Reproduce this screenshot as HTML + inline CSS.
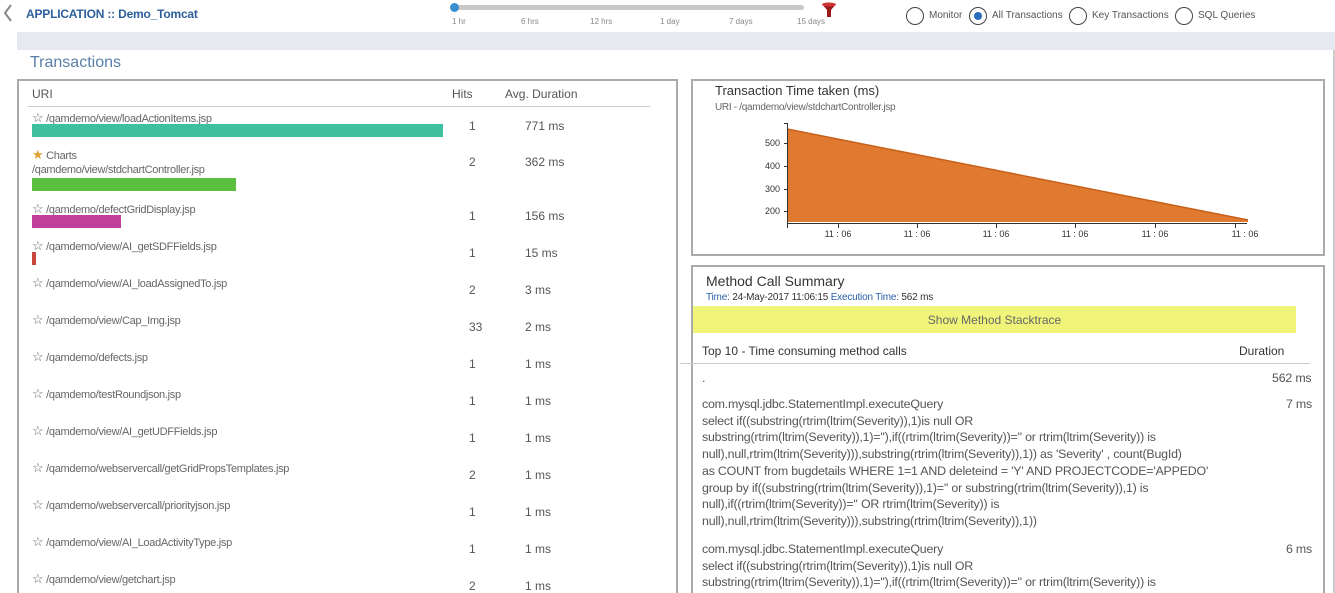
<!DOCTYPE html>
<html><head><meta charset="utf-8"><style>
*{margin:0;padding:0;box-sizing:border-box}
html{width:1335px;height:593px;overflow:hidden}
body{width:1335px;height:593px;overflow:hidden;background:#fff;font-family:"Liberation Sans",sans-serif;color:#555;position:relative}
.a{position:absolute;white-space:nowrap}
.u{font-size:11px;color:#666;letter-spacing:-0.3px}
.n{font-size:12px;color:#555}
.st{font-size:12px;color:#777}
.m{font-size:12.4px;color:#555;letter-spacing:-0.2px;line-height:16.7px}
</style></head><body>
<svg class="a" style="left:2px;top:4px" width="12" height="18"><path d="M9 1L3 9l6 8" stroke="#888" stroke-width="2" fill="none"/></svg>
<div class="a" style="left:26px;top:7px;font-size:12px;font-weight:bold;color:#2d5f9a;letter-spacing:-0.2px">APPLICATION :: Demo_Tomcat</div>
<div class="a" style="left:454px;top:5px;width:350px;height:5px;background:#c8c8c8;border-radius:3px"></div>
<div class="a" style="left:450px;top:3px;width:9px;height:9px;background:#3a8fd0;border-radius:50%"></div>
<div class="a" style="font-size:8px;color:#888;top:17px;left:452px">1 hr</div>
<div class="a" style="font-size:8px;color:#888;top:17px;left:521px">6 hrs</div>
<div class="a" style="font-size:8px;color:#888;top:17px;left:590px">12 hrs</div>
<div class="a" style="font-size:8px;color:#888;top:17px;left:660px">1 day</div>
<div class="a" style="font-size:8px;color:#888;top:17px;left:729px">7 days</div>
<div class="a" style="font-size:8px;color:#888;top:17px;left:797px">15 days</div>
<svg class="a" style="left:821px;top:2px" width="16" height="16"><path d="M1 2h14l-5 6v7h-4v-7z" fill="#9a1b1b"/><ellipse cx="8" cy="2.5" rx="7" ry="2" fill="#c33"/></svg>
<div class="a" style="left:906px;top:7px;width:18px;height:18px;border:1.5px solid #444;border-radius:50%"></div>
<div class="a st" style="left:929px;top:10px;font-size:10px;color:#555">Monitor</div>
<div class="a" style="left:969px;top:7px;width:18px;height:18px;border:1.5px solid #444;border-radius:50%"></div>
<div class="a" style="left:974px;top:12px;width:8px;height:8px;background:#2a6fb8;border-radius:50%"></div>
<div class="a st" style="left:992px;top:10px;font-size:10px;color:#555">All Transactions</div>
<div class="a" style="left:1069px;top:7px;width:18px;height:18px;border:1.5px solid #444;border-radius:50%"></div>
<div class="a st" style="left:1092px;top:10px;font-size:10px;color:#555">Key Transactions</div>
<div class="a" style="left:1175px;top:7px;width:18px;height:18px;border:1.5px solid #444;border-radius:50%"></div>
<div class="a st" style="left:1198px;top:10px;font-size:10px;color:#555">SQL Queries</div>
<div class="a" style="left:17px;top:32px;width:1318px;height:18px;background:#e6eaf0"></div>
<div class="a" style="left:30px;top:54px;font-size:16px;color:#5a7fa8">Transactions</div>
<div class="a" style="left:1333px;top:50px;width:2px;height:543px;background:#ccc"></div>
<div class="a" style="left:17px;top:79px;width:661px;height:530px;border:2px solid #aaa"></div>
<div class="a" style="left:32px;top:87px;font-size:12px;color:#555">URI</div>
<div class="a" style="left:452px;top:87px;font-size:12px;color:#555">Hits</div>
<div class="a" style="left:505px;top:87px;font-size:12px;color:#555">Avg. Duration</div>
<div class="a" style="left:28px;top:106px;width:622px;height:1px;background:#ccc"></div>

<div class="a u" style="left:32px;top:110px"><span style="font-size:13px">☆</span> /qamdemo/view/loadActionItems.jsp</div>
<div class="a" style="left:32px;top:124px;width:411px;height:13px;background:#3dbfa0"></div>
<div class="a n" style="left:469px;top:119px">1</div><div class="a n" style="left:525px;top:119px">771 ms</div>
<div class="a u" style="left:32px;top:147px"><span style="color:#e0a030;font-size:13px">★</span> Charts</div>
<div class="a u" style="left:32px;top:164px">/qamdemo/view/stdchartController.jsp</div>
<div class="a" style="left:32px;top:178px;width:204px;height:13px;background:#5bbf3f"></div>
<div class="a n" style="left:469px;top:155px">2</div><div class="a n" style="left:525px;top:155px">362 ms</div>
<div class="a u" style="left:32px;top:201px"><span style="font-size:13px">☆</span> /qamdemo/defectGridDisplay.jsp</div>
<div class="a" style="left:32px;top:215px;width:89px;height:13px;background:#c0409a"></div>
<div class="a n" style="left:469px;top:209px">1</div><div class="a n" style="left:525px;top:209px">156 ms</div>
<div class="a u" style="left:32px;top:238px"><span style="font-size:13px">☆</span> /qamdemo/view/AI_getSDFFields.jsp</div>
<div class="a" style="left:32px;top:252px;width:4px;height:13px;background:#c8483c"></div>
<div class="a n" style="left:469px;top:246px">1</div><div class="a n" style="left:525px;top:246px">15 ms</div>
<div class="a u" style="left:32px;top:275px"><span style="font-size:13px">☆</span> /qamdemo/view/AI_loadAssignedTo.jsp</div>
<div class="a n" style="left:469px;top:283px">2</div><div class="a n" style="left:525px;top:283px">3 ms</div>
<div class="a u" style="left:32px;top:312px"><span style="font-size:13px">☆</span> /qamdemo/view/Cap_Img.jsp</div>
<div class="a n" style="left:469px;top:320px">33</div><div class="a n" style="left:525px;top:320px">2 ms</div>
<div class="a u" style="left:32px;top:349px"><span style="font-size:13px">☆</span> /qamdemo/defects.jsp</div>
<div class="a n" style="left:469px;top:357px">1</div><div class="a n" style="left:525px;top:357px">1 ms</div>
<div class="a u" style="left:32px;top:386px"><span style="font-size:13px">☆</span> /qamdemo/testRoundjson.jsp</div>
<div class="a n" style="left:469px;top:394px">1</div><div class="a n" style="left:525px;top:394px">1 ms</div>
<div class="a u" style="left:32px;top:423px"><span style="font-size:13px">☆</span> /qamdemo/view/AI_getUDFFields.jsp</div>
<div class="a n" style="left:469px;top:431px">1</div><div class="a n" style="left:525px;top:431px">1 ms</div>
<div class="a u" style="left:32px;top:460px"><span style="font-size:13px">☆</span> /qamdemo/webservercall/getGridPropsTemplates.jsp</div>
<div class="a n" style="left:469px;top:468px">2</div><div class="a n" style="left:525px;top:468px">1 ms</div>
<div class="a u" style="left:32px;top:497px"><span style="font-size:13px">☆</span> /qamdemo/webservercall/priorityjson.jsp</div>
<div class="a n" style="left:469px;top:505px">1</div><div class="a n" style="left:525px;top:505px">1 ms</div>
<div class="a u" style="left:32px;top:534px"><span style="font-size:13px">☆</span> /qamdemo/view/AI_LoadActivityType.jsp</div>
<div class="a n" style="left:469px;top:542px">1</div><div class="a n" style="left:525px;top:542px">1 ms</div>
<div class="a u" style="left:32px;top:571px"><span style="font-size:13px">☆</span> /qamdemo/view/getchart.jsp</div>
<div class="a n" style="left:469px;top:579px">2</div><div class="a n" style="left:525px;top:579px">1 ms</div>

<div class="a" style="left:691px;top:79px;width:634px;height:177px;border:2px solid #aaa"></div>
<div class="a" style="left:715px;top:83px;font-size:13px;color:#333">Transaction Time taken (ms)</div>
<div class="a" style="left:715px;top:102px;font-size:10px;color:#666;letter-spacing:-0.3px">URI - /qamdemo/view/stdchartController.jsp</div>
<svg class="a" style="left:0;top:0" width="1335" height="260">
<polygon points="787,129 1248,220 1248,222 787,222" fill="#e07a30"/>
<line x1="787" y1="129" x2="1248" y2="220" stroke="#c85f18" stroke-width="1.5"/>
<g stroke="#333" stroke-width="1" fill="none">
<path d="M784,123.5h3.5V223.5H1247M784,143.5h3M784,166.5h3M784,189.5h3M784,211.5h3"/>
<path d="M787.5,223v5M838.5,223v5M917.5,223v5M996.5,223v5M1075.5,223v5M1155.5,223v5M1235.5,223v5"/>
</g>
<g font-family="Liberation Sans" font-size="9" fill="#333">
<text x="780" y="146" text-anchor="end">500</text><text x="780" y="169" text-anchor="end">400</text>
<text x="780" y="192" text-anchor="end">300</text><text x="780" y="214" text-anchor="end">200</text>
<text x="838" y="237" text-anchor="middle">11 : 06</text><text x="917" y="237" text-anchor="middle">11 : 06</text>
<text x="996" y="237" text-anchor="middle">11 : 06</text><text x="1075" y="237" text-anchor="middle">11 : 06</text>
<text x="1155" y="237" text-anchor="middle">11 : 06</text><text x="1245" y="237" text-anchor="middle">11 : 06</text>
</g></svg>

<div class="a" style="left:691px;top:265px;width:634px;height:340px;border:2px solid #aaa"></div>
<div class="a" style="left:706px;top:273px;font-size:14px;color:#333">Method Call Summary</div>
<div class="a" style="left:706px;top:292px;font-size:10px;color:#333;letter-spacing:-0.2px"><span style="color:#2a5fa8">Time:</span> 24-May-2017 11:06:15 <span style="color:#2a5fa8">Execution Time:</span> 562 ms</div>
<div class="a" style="left:693px;top:306px;width:603px;height:27px;background:#f0f57a"></div>
<div class="a" style="left:693px;top:313px;width:603px;text-align:center;font-size:12px;color:#666">Show Method Stacktrace</div>
<div class="a" style="left:702px;top:344px;font-size:12px;color:#333">Top 10 - Time consuming method calls</div>
<div class="a" style="left:1239px;top:344px;font-size:12px;color:#333">Duration</div>
<div class="a" style="left:680px;top:363px;width:630px;height:1px;background:#ccc"></div>
<div class="a m" style="left:702px;top:370px">.</div>
<div class="a m" style="left:1272px;top:370px">562 ms</div>
<div class="a m" style="left:702px;top:396px">com.mysql.jdbc.StatementImpl.executeQuery<br>select if((substring(rtrim(ltrim(Severity)),1)is null OR<br>substring(rtrim(ltrim(Severity)),1)=''),if((rtrim(ltrim(Severity))='' or rtrim(ltrim(Severity)) is<br>null),null,rtrim(ltrim(Severity))),substring(rtrim(ltrim(Severity)),1)) as 'Severity' , count(BugId)<br>as COUNT from bugdetails WHERE 1=1 AND deleteind = 'Y' AND PROJECTCODE='APPEDO'<br>group by if((substring(rtrim(ltrim(Severity)),1)='' or substring(rtrim(ltrim(Severity)),1) is<br>null),if((rtrim(ltrim(Severity))='' OR rtrim(ltrim(Severity)) is<br>null),null,rtrim(ltrim(Severity))),substring(rtrim(ltrim(Severity)),1))</div>
<div class="a m" style="left:1286px;top:396px">7 ms</div>
<div class="a m" style="left:702px;top:541px">com.mysql.jdbc.StatementImpl.executeQuery<br>select if((substring(rtrim(ltrim(Severity)),1)is null OR<br>substring(rtrim(ltrim(Severity)),1)=''),if((rtrim(ltrim(Severity))='' or rtrim(ltrim(Severity)) is</div>
<div class="a m" style="left:1286px;top:541px">6 ms</div>
</body></html>
